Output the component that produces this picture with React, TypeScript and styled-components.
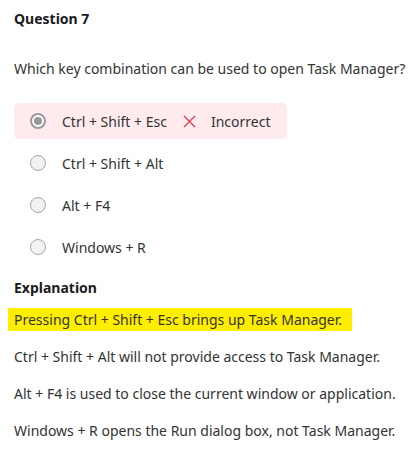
import React from 'react';
import styled, { createGlobalStyle } from 'styled-components';

const GlobalStyle = createGlobalStyle`
  body {
    margin: 0;
    background: #ffffff;
    font-family: "Noto Sans", "Open Sans", sans-serif;
  }
`;

const Page = styled.div`
  padding: 9px 0 0 14px;
  color: #333333;
`;

const Heading = styled.h3<{ $top?: number }>`
  margin: ${(p) => p.$top ?? 0}px 0 0 0;
  font-size: 14px;
  font-weight: 700;
  line-height: 20px;
  color: #1b1b22;
`;

const Prompt = styled.p`
  margin: 30px 0 0 0;
  font-size: 14px;
  line-height: 20px;
  white-space: nowrap;
  color: #333333;
`;

const Options = styled.div`
  display: flex;
  flex-direction: column;
  margin-top: 24px;
  gap: 6px;
`;

const OptionRow = styled.div<{ $wrong?: boolean }>`
  display: flex;
  align-items: center;
  gap: 16px;
  height: 36px;
  padding: 0 16px;
  width: fit-content;
  min-width: 273px;
  box-sizing: border-box;
  border-radius: 5px;
  background: ${(p) => (p.$wrong ? '#ffebee' : 'transparent')};
  font-size: 14px;
  color: #333333;
`;

const Radio = styled.span<{ $checked?: boolean }>`
  position: relative;
  width: 16px;
  height: 16px;
  box-sizing: border-box;
  border-radius: 50%;
  flex: none;
  border: 1px solid ${(p) => (p.$checked ? '#9a9a9a' : '#a8a8a8')};
  background: ${(p) => (p.$checked ? '#ffffff' : '#f2f2f2')};
  border-width: ${(p) => (p.$checked ? '2px' : '1px')};

  &::after {
    content: '';
    display: ${(p) => (p.$checked ? 'block' : 'none')};
    position: absolute;
    inset: 2px;
    border-radius: 50%;
    background: #9a9a9a;
  }
`;

const Verdict = styled.span`
  display: flex;
  align-items: center;
  gap: 15px;
`;

const Lines = styled.div`
  display: flex;
  flex-direction: column;
  gap: 17px;
  margin-top: 12px;
`;

const Line = styled.p`
  margin: 0;
  font-size: 14px;
  line-height: 20px;
  white-space: nowrap;
  color: #333333;
`;

const Marked = styled.span`
  background: #ffee00;
  padding: 2px 10px 2px 6px;
  margin-left: -6px;
  box-decoration-break: clone;
`;

const CrossIcon = () => (
  <svg width="13" height="13" viewBox="0 0 13 13" fill="none">
    <path d="M1 1 L12 12 M12 1 L1 12" stroke="#e03a4e" strokeWidth="1.3" />
  </svg>
);

const options = [
  { label: 'Ctrl + Shift + Esc', chosen: true },
  { label: 'Ctrl + Shift + Alt' },
  { label: 'Alt + F4' },
  { label: 'Windows + R' },
];

const explanations = [
  'Ctrl + Shift + Alt will not provide access to Task Manager.',
  'Alt + F4 is used to close the current window or application.',
  'Windows + R opens the Run dialog box, not Task Manager.',
];

export default function App() {
  return (
    <>
      <GlobalStyle />
      <Page>
        <Heading>Question 7</Heading>
        <Prompt>Which key combination can be used to open Task Manager?</Prompt>
        <Options>
          {options.map((o) => (
            <OptionRow key={o.label} $wrong={o.chosen}>
              <Radio $checked={o.chosen} />
              <span>{o.label}</span>
              {o.chosen && (
                <Verdict>
                  <CrossIcon />
                  <span>Incorrect</span>
                </Verdict>
              )}
            </OptionRow>
          ))}
        </Options>
        <Heading $top={13}>Explanation</Heading>
        <Lines>
          <Line>
            <Marked>Pressing Ctrl + Shift + Esc brings up Task Manager.</Marked>
          </Line>
          {explanations.map((t) => (
            <Line key={t}>{t}</Line>
          ))}
        </Lines>
      </Page>
    </>
  );
}
